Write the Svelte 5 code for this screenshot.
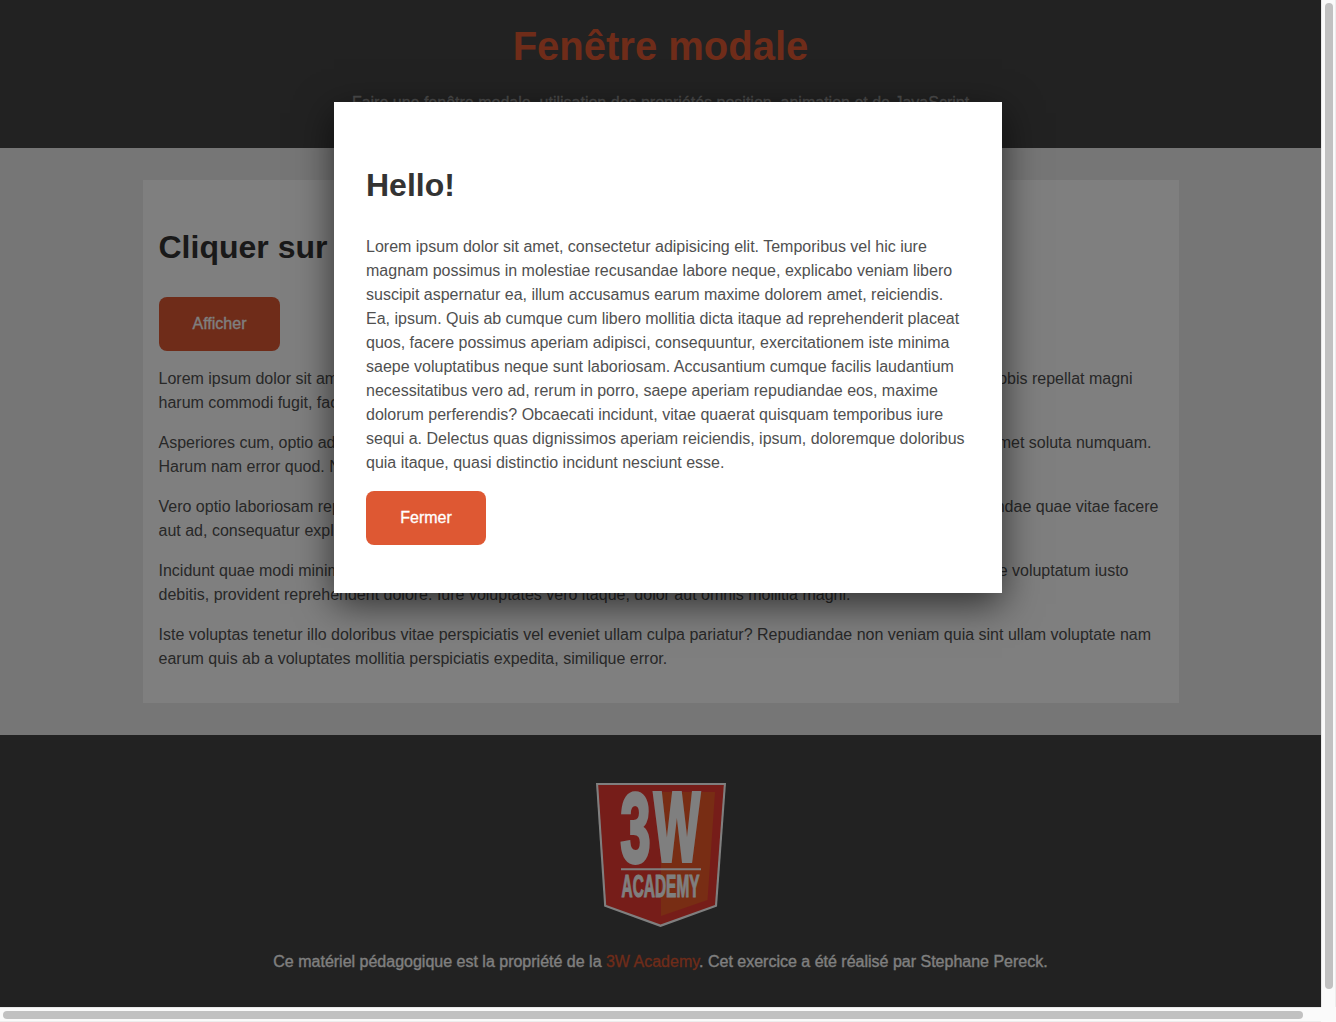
<script>
  let open = $state(true);

  // Each row holds the opening and closing words of a justified line and its width.
  const paragraphs = [
    [
      { start: 'Lorem ipsum dolor sit amet, consectetur', end: 'nobis repellat magni', width: 974 },
      { start: 'harum commodi fugit, facere' },
    ],
    [
      { start: 'Asperiores cum, optio adipisci', end: 'amet soluta numquam.', width: 993 },
      { start: 'Harum nam error quod. Nemo' },
    ],
    [
      { start: 'Vero optio laboriosam repellat', end: 'repudiandae quae vitae facere', width: 1000 },
      { start: 'aut ad, consequatur explicabo' },
    ],
    [
      { start: 'Incidunt quae modi minima', end: 'esse voluptatum iusto', width: 970 },
      { start: 'debitis, provident reprehenderit dolore. Iure voluptates vero itaque, dolor aut omnis mollitia magni.' },
    ],
    [
      { start: 'Iste voluptas tenetur illo doloribus vitae perspiciatis vel eveniet ullam culpa pariatur? Repudiandae non veniam quia sint ullam voluptate nam' },
      { start: 'earum quis ab a voluptates mollitia perspiciatis expedita, similique error.' },
    ],
  ];

  const message = [
    'Lorem ipsum dolor sit amet, consectetur adipisicing elit. Temporibus vel hic iure',
    'magnam possimus in molestiae recusandae labore neque, explicabo veniam libero',
    'suscipit aspernatur ea, illum accusamus earum maxime dolorem amet, reiciendis.',
    'Ea, ipsum. Quis ab cumque cum libero mollitia dicta itaque ad reprehenderit placeat',
    'quos, facere possimus aperiam adipisci, consequuntur, exercitationem iste minima',
    'saepe voluptatibus neque sunt laboriosam. Accusantium cumque facilis laudantium',
    'necessitatibus vero ad, rerum in porro, saepe aperiam repudiandae eos, maxime',
    'dolorum perferendis? Obcaecati incidunt, vitae quaerat quisquam temporibus iure',
    'sequi a. Delectus quas dignissimos aperiam reiciendis, ipsum, doloremque doloribus',
    'quia itaque, quasi distinctio incidunt nesciunt esse.',
  ];
</script>

<div class="window">
  <div class="page">
    <header>
      <h1>Fenêtre modale</h1>
      <p>Faire une fenêtre modale, utilisation des propriétés position, animation et de JavaScript</p>
    </header>

    <main>
      <section class="card">
        <h2>Cliquer sur le bouton</h2>
        <button class="btn" onclick={() => (open = true)}>Afficher</button>
        {#each paragraphs as rows}
          <p>
            {#each rows as row}
              <span class="row" style:width={row.width ? `${row.width}px` : null}>
                <span>{row.start}</span>{#if row.end}<span>{row.end}</span>{/if}
              </span>
            {/each}
          </p>
        {/each}
      </section>
    </main>

    <footer>
      <svg class="logo" width="130" height="144" viewBox="0 0 130 144" aria-label="3W Academy">
        <path d="M0 0H130L121 123.5L64.5 144L8.2 123.5Z" fill="#fff" />
        <path d="M2.200 2H127.800L119 122L64.500 141.600L10.200 122Z" fill="#ed3a32" />
        <path d="M65 9H119L111.500 117L65 133Z" fill="#f05a28" />
        <g fill="#fff" stroke="#fff" font-family="Liberation Sans" font-weight="700">
          <text transform="translate(24.600 78.500) scale(.55 1)" font-size="98" stroke-width="4">3</text>
          <text transform="translate(57.700 78) scale(.5 1)" font-size="98" stroke-width="4">W</text>
          <text transform="translate(25.600 114.300) scale(.49 1)" font-size="30.500" stroke-width="1" textLength="159" lengthAdjust="spacingAndGlyphs">ACADEMY</text>
        </g>
        <path d="M25 85.300H105V87.300H25Z" fill="#fff" />
      </svg>
      <p>Ce matériel pédagogique est la propriété de la <a href="#top">3W Academy</a>. Cet exercice a été réalisé par Stephane Pereck.</p>
    </footer>

    {#if open}
      <div class="overlay"></div>
    {/if}
  </div>
  <div class="bar vertical"><div class="thumb"></div></div>
  <div class="bar horizontal"><div class="thumb"></div></div>

  {#if open}
    <div class="modal" role="dialog">
      <h2>Hello!</h2>
      <p>
        {#each message as line}
          <span class="row">{line}</span>
        {/each}
      </p>
      <button class="btn" onclick={() => (open = false)}>Fermer</button>
    </div>
  {/if}
</div>

<style>
  :global(body) {
    margin: 0;
    overflow: hidden;
  }
  .window {
    position: relative;
    display: grid;
    grid-template: 1007px 15px / 1321px 15px;
    width: 1336px;
    height: 1022px;
    overflow: hidden;
    background: #fafafa;
    font: 16px/24px 'Liberation Sans', Arial, sans-serif;
    color: #505050;
  }
  .page {
    position: relative;
    display: flex;
    flex-direction: column;
    background: #ececec;
    overflow: hidden;
  }
  h1, h2, p { margin: 0; }
  header {
    box-sizing: border-box;
    height: 148px;
    padding-top: 16px;
    background: #444;
    text-align: center;
  }
  h1 {
    font-size: 40px;
    line-height: 60px;
    color: #de5833;
  }
  header p {
    margin-top: 15px;
    color: #999;
    -webkit-text-stroke: 0.3px;
  }
  main {
    padding: 32px 142px 32px 143px;
  }
  .card {
    box-sizing: border-box;
    height: 523px;
    padding: 43px 16px 0;
    background: #fff;
  }
  h2 {
    font-size: 32px;
    line-height: 48px;
    color: #333;
    white-space: nowrap;
  }
  .card h2 {
    margin: 0 0 26px -0.5px;
  }
  .card p {
    margin: 0 0 16px -0.5px;
  }
  .row {
    display: flex;
    justify-content: space-between;
    white-space: nowrap;
  }
  .btn {
    display: block;
    width: 121px;
    height: 54px;
    padding: 0;
    margin-bottom: 16px;
    border: 0;
    border-radius: 8px;
    background: #de5833;
    color: #fff;
    font: inherit;
    -webkit-text-stroke: 0.3px;
  }
  footer {
    flex: 1;
    display: flex;
    flex-direction: column;
    align-items: center;
    padding-top: 48px;
    background: #444;
    color: #fff;
  }
  .logo {
    display: block;
    overflow: visible;
  }
  footer p {
    margin-top: 23px;
    -webkit-text-stroke: 0.3px;
  }
  footer a {
    color: #de5833;
    text-decoration: none;
  }
  .overlay {
    position: absolute;
    inset: 0;
    background: rgba(0, 0, 0, 0.5);
  }
  .modal {
    position: absolute;
    left: 334px;
    top: 102px;
    box-sizing: border-box;
    width: 668px;
    height: 491px;
    padding: 59px 32px 0;
    background: #fff;
    box-shadow: 0 11px 36px rgba(0, 0, 0, 0.62);
  }
  .modal p { margin: 26px 0 16px; }
  .modal .btn { width: 120px; }
  .bar {
    box-sizing: border-box;
    background: #fafafa;
  }
  .vertical {
    border-left: 1px solid #e8e8e8;
    border-right: 1px solid #ededed;
    padding: 3px 2px 0 3px;
  }
  .horizontal {
    border-top: 1px solid #e8e8e8;
    border-bottom: 1px solid #ededed;
    padding: 3px 0 0 3px;
  }
  .thumb {
    border-radius: 4px;
    background: #c1c1c1;
  }
  .vertical .thumb {
    width: 8px;
    height: 986px;
  }
  .horizontal .thumb {
    width: 1300px;
    height: 8px;
  }
</style>
